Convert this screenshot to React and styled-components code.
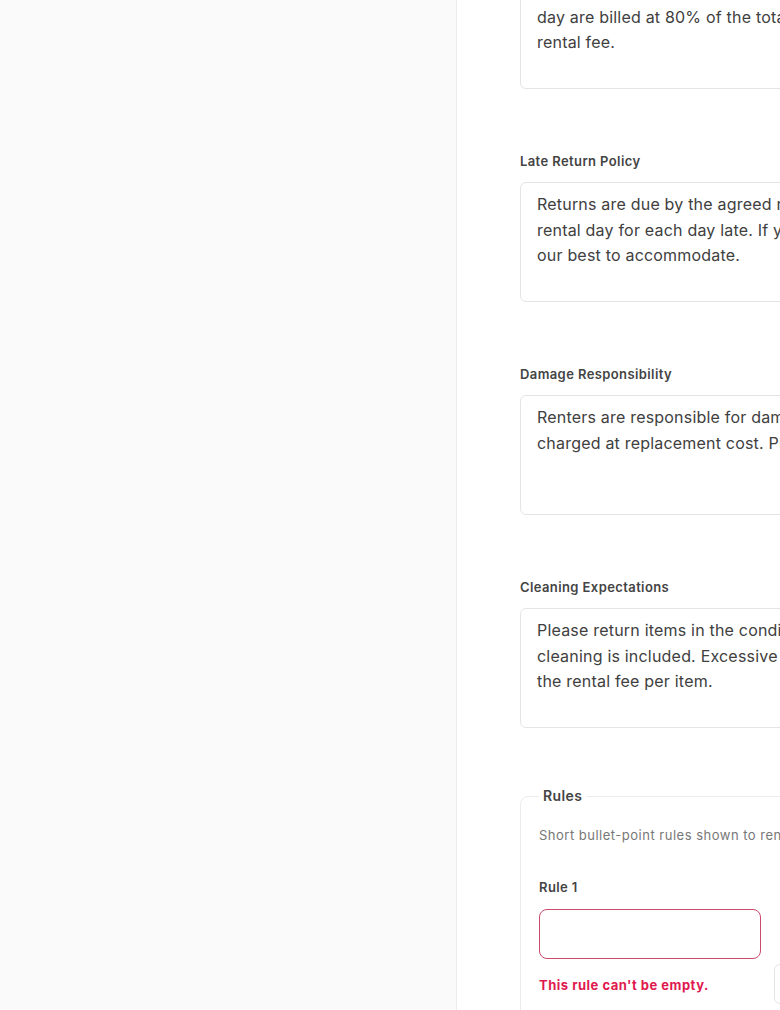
import React from 'react';
import styled, { createGlobalStyle } from 'styled-components';

const GlobalStyle = createGlobalStyle`
  html, body {
    margin: 0;
    padding: 0;
    height: 100%;
    overflow: hidden;
  }
  body {
    font-family: Inter, "Noto Sans", "Liberation Sans", sans-serif;
    color: #3f3f3f;
    background: #ffffff;
  }
`;

const policies = [
  {
    id: 'cancel',
    label: 'Cancellation Policy',
    hideLabel: true,
    text: 'Cancellations made more than 48 hours before pickup are fully refunded. Cancellations within one\nday are billed at 80% of the total\nrental fee.',
  },
  {
    id: 'late',
    label: 'Late Return Policy',
    text: "Returns are due by the agreed return time. Late returns are charged one full\nrental day for each day late. If you need an extension, let us know and we'll do\nour best to accommodate.",
  },
  {
    id: 'damage',
    label: 'Damage Responsibility',
    text: 'Renters are responsible for damage beyond normal wear and tear. Lost or damaged items are\ncharged at replacement cost. Please report any issues at pickup.',
  },
  {
    id: 'cleaning',
    label: 'Cleaning Expectations',
    text: 'Please return items in the condition you received them. Standard\ncleaning is included. Excessive cleaning may incur a fee of up to 25% of\nthe rental fee per item.',
  },
];

export default function App() {
  return (
    <>
      <GlobalStyle />
      <Page>
        <Sidebar />
        <Main>
          <Form onSubmit={(e) => e.preventDefault()}>
            {policies.map((p, i) => (
              <Field key={p.id} $first={i === 0}>
                {!p.hideLabel && <Label htmlFor={p.id}>{p.label}</Label>}
                <TextArea id={p.id} wrap="off" defaultValue={p.text} />
              </Field>
            ))}

            <Fieldset>
              <Legend>Rules</Legend>
              <Hint>Short bullet-point rules shown to renters.</Hint>
              <RuleRow>
                <RuleField>
                  <Label htmlFor="rule-1">Rule 1</Label>
                  <RuleInput id="rule-1" $invalid />
                  <ErrorText>This rule can't be empty.</ErrorText>
                </RuleField>
                <RemoveButton type="button" aria-label="Remove rule" />
              </RuleRow>
            </Fieldset>
          </Form>
        </Main>
      </Page>
    </>
  );
}

const Page = styled.div`
  display: flex;
  height: 100vh;
  overflow: hidden;
`;

const Sidebar = styled.aside`
  width: 456px;
  flex-shrink: 0;
  background: #fafafa;
  border-right: 1px solid #ededed;
`;

const Main = styled.main`
  flex: 1;
  min-width: 0;
  background: #ffffff;
  padding-left: 63px;
  overflow: hidden;
`;

const Form = styled.form`
  width: 620px;
  display: flex;
  flex-direction: column;
`;

const Field = styled.div`
  display: flex;
  flex-direction: column;
  gap: 12px;
  margin-top: ${(p) => (p.$first ? '-31px' : '0')};
  margin-bottom: 63px;
`;

const Label = styled.label`
  font-size: 13px;
  line-height: 18px;
  font-weight: 600;
  letter-spacing: 0.4px;
  color: #444444;
`;

const TextArea = styled.textarea`
  box-sizing: border-box;
  height: 120px;
  width: 100%;
  padding: 9px 16px;
  border: 1px solid #e4e4e4;
  border-radius: 6px;
  font-family: inherit;
  font-size: 16px;
  line-height: 25.6px;
  letter-spacing: 0.2px;
  color: #404040;
  resize: none;
  overflow: hidden;
  outline: none;
`;

const Fieldset = styled.fieldset`
  margin: -5px 0 0;
  padding: 20px 18px 24px;
  border: 1px solid #ececec;
  border-radius: 8px;
`;

const Legend = styled.legend`
  padding: 0 4px;
  font-size: 14px;
  line-height: 20px;
  font-weight: 600;
  letter-spacing: 0.4px;
  color: #444444;
`;

const Hint = styled.p`
  margin: 0 0 34px;
  font-size: 13px;
  line-height: 18px;
  letter-spacing: 0.5px;
  color: #777777;
  white-space: nowrap;
`;

const RuleRow = styled.div`
  display: flex;
  align-items: flex-start;
  gap: 13px;
`;

const RuleField = styled.div`
  display: flex;
  flex-direction: column;
  width: 222px;
  gap: 13px;
`;

const RuleInput = styled.input`
  box-sizing: border-box;
  height: 50px;
  width: 100%;
  padding: 0 14px;
  border: 1px solid ${(p) => (p.$invalid ? '#cc4a6e' : '#e4e4e4')};
  border-radius: 8px;
  font-family: inherit;
  font-size: 16px;
  outline: none;
`;

const ErrorText = styled.span`
  margin-top: 4px;
  font-size: 13px;
  line-height: 18px;
  font-weight: 700;
  letter-spacing: 0.5px;
  color: #e0194e;
`;

const RemoveButton = styled.button`
  margin-top: 86px;
  width: 40px;
  height: 40px;
  border: 1px solid #e4e4e4;
  border-radius: 6px;
  background: #ffffff;
  flex-shrink: 0;
`;
